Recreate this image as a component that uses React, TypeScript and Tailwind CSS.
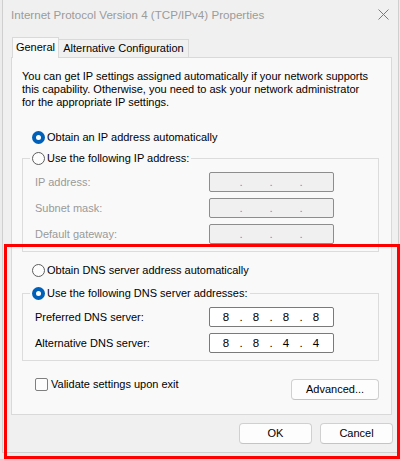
import type { ReactNode } from 'react'

const FONT = "font-['Segoe_UI','Liberation_Sans',Arial,sans-serif]"

const Radio = ({ checked, label }: { checked?: boolean; label: string }) => (
  <div className="flex h-[16px] items-center">
    {checked ? (
      <span className="flex h-[13px] w-[13px] items-center justify-center rounded-full bg-[#005fb8]">
        <span className="h-[5px] w-[5px] rounded-full bg-white" />
      </span>
    ) : (
      <span className="h-[13px] w-[13px] rounded-full border border-[#5d5d5d] bg-[#fdfdfd]" />
    )}
    <span className="ml-[2px] whitespace-nowrap text-black">{label}</span>
  </div>
)

const IpInput = ({ parts, disabled }: { parts?: string[]; disabled?: boolean }) => {
  const cells = parts ?? ['', '', '', '']
  return (
    <div
      className={`flex h-[20px] w-[125px] items-center rounded-[2px] border pl-[3px] text-[11.5px] ${
        disabled ? 'border-[#8d8d8d] bg-[#f0f0f0] text-[#8a8aa0]' : 'border-[#7a7a7a] bg-white text-black'
      }`}
    >
      {cells.map((part, index) => (
        <div key={index} className="flex items-center">
          <span className="w-[26px] text-center">{part}</span>
          {index < 3 ? <span className="w-[4px] text-center">.</span> : null}
        </div>
      ))}
    </div>
  )
}

const FieldRow = ({ label, children, disabled }: { label: string; children: ReactNode; disabled?: boolean }) => (
  <div className="flex h-[20px] items-center">
    <span className={`w-[186px] pl-[12px] ${disabled ? 'text-[#9a9a9a]' : 'text-black'}`}>{label}</span>
    {children}
  </div>
)

const GroupBox = ({ legend, checked, children }: { legend: string; checked?: boolean; children: ReactNode }) => (
  <fieldset className="ml-[10px] w-[357px] border border-[#dcdcdc] pb-[7px]">
    <legend className="ml-[7px] px-[2px]">
      <Radio checked={checked} label={legend} />
    </legend>
    <div className="mt-[6px] flex flex-col gap-[6px]">{children}</div>
  </fieldset>
)

const DialogButton = ({ label, width }: { label: string; width: string }) => (
  <button
    type="button"
    className={`flex h-[21px] items-center justify-center rounded-[4px] border border-[#d0d0d0] border-b-[#c4c4c4] bg-[#fdfdfd] text-black ${width}`}
  >
    {label}
  </button>
)

export default function App() {
  return (
    <div className={`relative h-[459px] w-[400px] overflow-hidden bg-[#ececec] text-[11px] leading-[13px] ${FONT}`}>
      <div className="ml-[2px] flex h-[453px] w-[397px] flex-col border-b border-l border-r border-[#cfcfcf] bg-[#f0f0f0]">
        {/* title bar */}
        <div className="flex h-[28px] items-center justify-between pl-[8px] pr-[8px]">
          <span className="text-[11.6px] text-[#9b9b9b]">Internet Protocol Version 4 (TCP/IPv4) Properties</span>
          <svg width="11" height="11" viewBox="0 0 11 11" className="mr-[1px] mt-[1px]">
            <path d="M0.5 0.5 L10.5 10.5 M10.5 0.5 L0.5 10.5" stroke="#7a7a7a" strokeWidth="1" fill="none" />
          </svg>
        </div>

        {/* tabs */}
        <div className="ml-[9px] mt-[9px] flex h-[21px] items-end whitespace-nowrap">
          <div className="relative z-10 flex h-[21px] w-[47px] items-center justify-center border-l border-r border-t border-[#d9d9d9] bg-[#f9f9f9] pb-[1px] text-black">
            General
          </div>
          <div className="flex h-[19px] w-[130px] items-center justify-center border-r border-t border-[#d9d9d9] bg-[#f0f0f0] pb-[1px] text-black">
            Alternative Configuration
          </div>
        </div>

        {/* panel */}
        <div className="-mt-px ml-[8px] flex h-[358px] w-[381px] flex-col border border-[#d9d9d9] bg-[#f9f9f9]">
          <p className="ml-[10px] mt-[12px] whitespace-nowrap text-black">
            You can get IP settings assigned automatically if your network supports
            <br />
            this capability. Otherwise, you need to ask your network administrator
            <br />
            for the appropriate IP settings.
          </p>

          <div className="ml-[20px] mt-[20px]">
            <Radio checked label="Obtain an IP address automatically" />
          </div>

          <div className="mt-[5px]">
            <GroupBox legend="Use the following IP address:">
              <FieldRow label="IP address:" disabled>
                <IpInput disabled />
              </FieldRow>
              <FieldRow label="Subnet mask:" disabled>
                <IpInput disabled />
              </FieldRow>
              <FieldRow label="Default gateway:" disabled>
                <IpInput disabled />
              </FieldRow>
            </GroupBox>
          </div>

          <div className="ml-[20px] mt-[10px]">
            <Radio label="Obtain DNS server address automatically" />
          </div>

          <div className="mt-[7px]">
            <GroupBox legend="Use the following DNS server addresses:" checked>
              <FieldRow label="Preferred DNS server:">
                <IpInput parts={['8', '8', '8', '8']} />
              </FieldRow>
              <FieldRow label="Alternative DNS server:">
                <IpInput parts={['8', '8', '4', '4']} />
              </FieldRow>
            </GroupBox>
          </div>

          <div className="ml-[23px] mr-[12px] mt-[17px] flex items-start justify-between">
            <label className="flex h-[13px] items-center">
              <span className="h-[13px] w-[13px] rounded-[2px] border border-[#7f7f7f] bg-[#fdfdfd]" />
              <span className="ml-[3px] text-black">Validate settings upon exit</span>
            </label>
            <div className="mt-[1px]">
              <DialogButton label="Advanced..." width="w-[88px]" />
            </div>
          </div>
        </div>

        {/* footer */}
        <div className="mt-[8px] flex justify-end gap-[8px] pr-[5px]">
          <DialogButton label="OK" width="w-[73px]" />
          <DialogButton label="Cancel" width="w-[73px]" />
        </div>
      </div>

      {/* annotation */}
      <div className="absolute left-[4px] top-[244px] h-[215px] w-[396px] border-[3px] border-[#ff0000]" />
    </div>
  )
}
